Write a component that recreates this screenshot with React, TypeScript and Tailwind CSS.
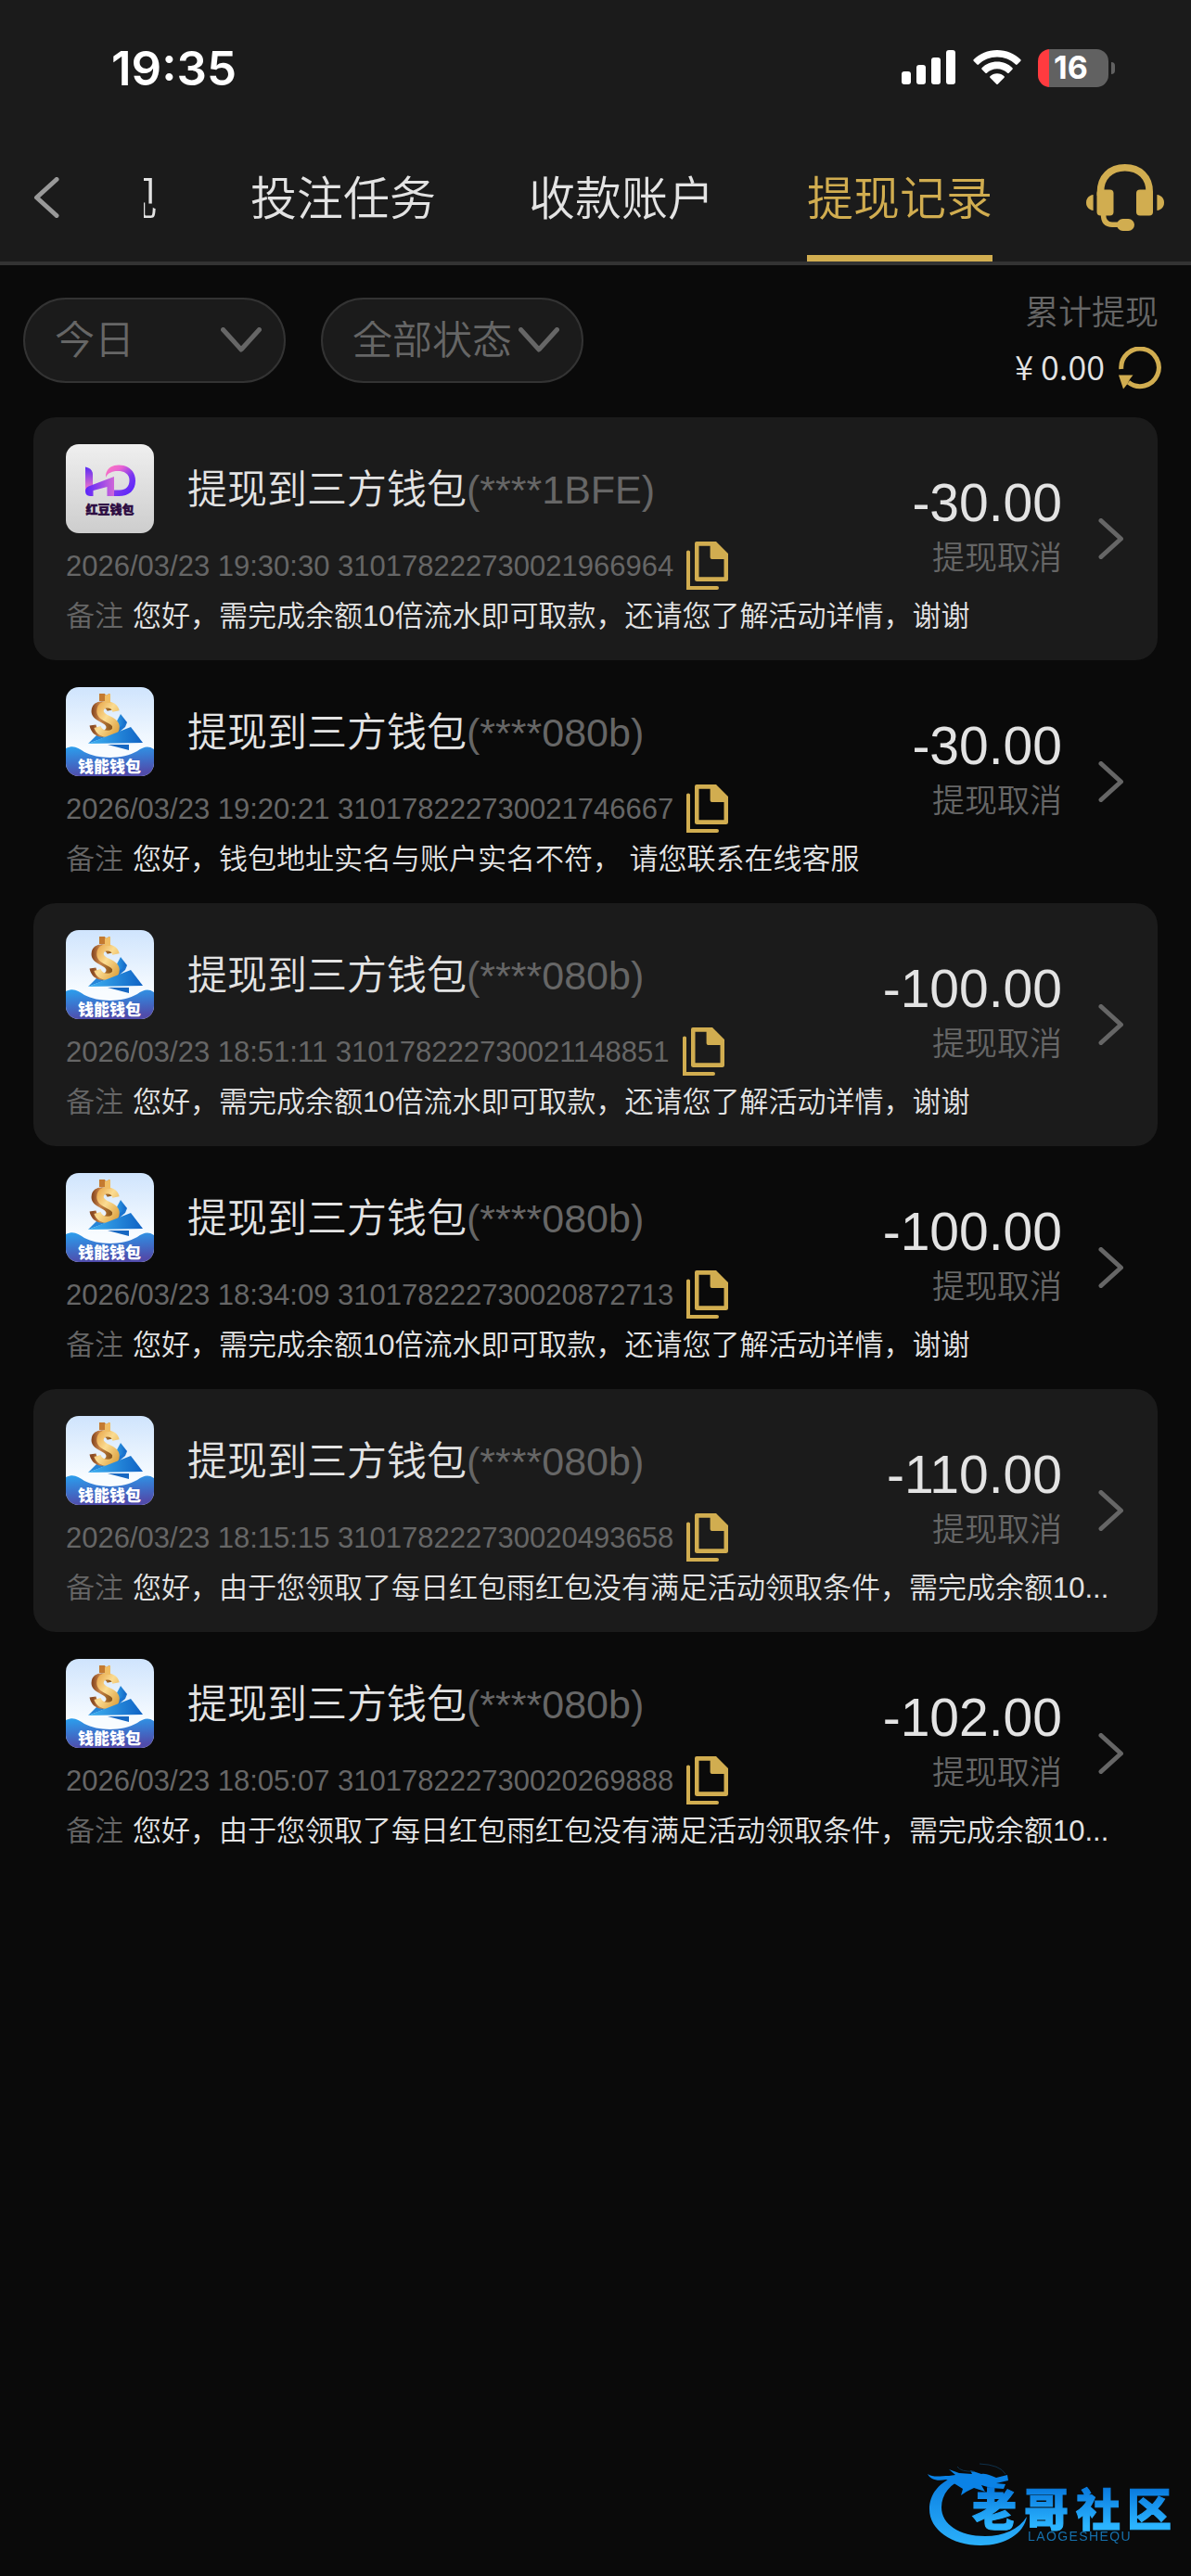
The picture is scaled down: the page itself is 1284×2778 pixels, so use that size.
import React from 'react';

type Wallet = 'hd' | 'qn';

interface WithdrawRecord {
  wallet: Wallet;
  account: string;
  time: string;
  order: string;
  note: string;
  amount: string;
}

const FLOW_NOTE = '您好，需完成余额10倍流水即可取款，还请您了解活动详情，谢谢';
const RAIN_NOTE = '您好，由于您领取了每日红包雨红包没有满足活动领取条件，需完成余额10...';

const RECORDS: WithdrawRecord[] = [
  { wallet: 'hd', account: '(****1BFE)', time: '2026/03/23 19:30:30', order: '310178222730021966964', note: FLOW_NOTE, amount: '-30.00' },
  { wallet: 'qn', account: '(****080b)', time: '2026/03/23 19:20:21', order: '310178222730021746667', note: '您好，钱包地址实名与账户实名不符， 请您联系在线客服', amount: '-30.00' },
  { wallet: 'qn', account: '(****080b)', time: '2026/03/23 18:51:11', order: '310178222730021148851', note: FLOW_NOTE, amount: '-100.00' },
  { wallet: 'qn', account: '(****080b)', time: '2026/03/23 18:34:09', order: '310178222730020872713', note: FLOW_NOTE, amount: '-100.00' },
  { wallet: 'qn', account: '(****080b)', time: '2026/03/23 18:15:15', order: '310178222730020493658', note: RAIN_NOTE, amount: '-110.00' },
  { wallet: 'qn', account: '(****080b)', time: '2026/03/23 18:05:07', order: '310178222730020269888', note: RAIN_NOTE, amount: '-102.00' },
];

function StatusBar() {
  return (
    <div className="flex h-36 items-center justify-between pl-[120px] pr-[82px] pt-[2px] text-white">
      <span className="font-[Inter,sans-serif] text-[51px] font-semibold leading-none">19:35</span>
      <div className="flex items-center gap-[18px]">
        <svg width="59" height="38" viewBox="0 0 59 38" fill="currentColor" aria-hidden="true">
          <rect x="0" y="23" width="10" height="14" rx="3" />
          <rect x="16" y="16" width="10" height="21" rx="3" />
          <rect x="32" y="8" width="10" height="29" rx="3" />
          <rect x="48" y="0" width="10" height="37" rx="3" />
        </svg>
        <svg width="52" height="38" viewBox="0 0 52 38" fill="currentColor" aria-hidden="true">
          <path d="M26 0C36 0 45 4 51.400 10.200Q52 11 51.400 11.800L47.600 15.600Q46.800 16.300 46 15.600C40.600 10.500 33.700 7.600 26 7.600S11.400 10.500 6 15.600Q5.200 16.300 4.400 15.600L.6 11.800Q0 11 .6 10.200C7 4 16 0 26 0Z" />
          <path d="M26 12.600C32.400 12.600 38.200 15.100 42.500 19.200Q43.200 20 42.500 20.800L38.600 24.700Q37.900 25.300 37.100 24.700C34.100 21.900 30.200 20.300 26 20.300S17.900 21.900 14.900 24.700Q14.100 25.300 13.400 24.700L9.500 20.800Q8.800 20 9.500 19.200C13.800 15.100 19.600 12.600 26 12.600Z" />
          <path d="M26 25.200C29 25.200 31.600 26.300 33.600 28.200Q34.300 29 33.600 29.800L26.700 36.700Q26 37.300 25.300 36.700L18.400 29.800Q17.700 29 18.400 28.200C20.400 26.300 23 25.200 26 25.200Z" />
        </svg>
        <div className="flex items-center gap-[3px]">
          <span className="flex h-[41px] w-[76px] items-center rounded-[13px] bg-[linear-gradient(90deg,#ff3b3f_12px,#616161_12px)] pl-[17px] font-[Inter,sans-serif] text-[34px] font-bold leading-none">
            16
          </span>
          <span className="h-[13px] w-1 rounded-r-full bg-[#616161]" />
        </div>
      </div>
    </div>
  );
}

function HeadsetIcon() {
  return (
    <svg width="84" height="72" viewBox="0 0 84 72" fill="#d1ad50" aria-hidden="true">
      <path d="M15.500 34V30C15.500 14 26 3.800 41.800 3.800S68.200 14 68.200 30V34" fill="none" stroke="#d1ad50" strokeWidth="7.600" />
      <rect x="11.500" y="27.500" width="18" height="28" rx="4" />
      <rect x="54" y="27.500" width="18" height="28" rx="4" />
      <path d="M7.600 33V50C3 49.500 0 46 0 41.500S3 33.500 7.600 33Z" />
      <path d="M76.400 33V50C81 49.500 84 46 84 41.500S81 33.500 76.400 33Z" />
      <path d="M18.500 54C18.500 61.500 22 65.200 28 65.200H38" fill="none" stroke="#d1ad50" strokeWidth="5.500" />
      <rect x="33" y="59" width="19" height="13" rx="6.500" />
    </svg>
  );
}

function Chevron({ dir, className }: { dir: 'left' | 'right' | 'down'; className?: string }) {
  if (dir === 'down') {
    return (
      <svg width="44" height="28" viewBox="0 0 44 28" fill="none" className={className} aria-hidden="true">
        <path d="M2.500 2.500L22 24L41.500 2.500" stroke="currentColor" strokeWidth="5" strokeLinecap="round" strokeLinejoin="round" />
      </svg>
    );
  }
  return (
    <svg width="28" height="44" viewBox="0 0 28 44" fill="none" className={className} aria-hidden="true">
      <path
        d={dir === 'left' ? 'M25 2.500L3.500 22L25 41.500' : 'M3 2.500L24.500 22L3 41.500'}
        stroke="currentColor"
        strokeWidth="5"
        strokeLinecap="round"
        strokeLinejoin="round"
      />
    </svg>
  );
}

function TopNav() {
  const tabs = ['现', '投注任务', '收款账户', '提现记录'];
  return (
    <nav className="flex h-[138px] items-stretch">
      <button type="button" aria-label="返回" className="w-[155px] shrink-0 pl-9 text-[#999]">
        <Chevron dir="left" />
      </button>
      <div className="flex min-w-0 flex-1 justify-end gap-[100px] overflow-hidden">
        {tabs.map((tab) => (
          <a
            key={tab}
            href="#"
            aria-current={tab === '提现记录' ? 'page' : undefined}
            className={`flex shrink-0 items-center border-b-[7px] pt-[10px] text-[50px] leading-none ${
              tab === '提现记录' ? 'border-[#d1ad50] text-[#d1ad50]' : 'border-transparent text-[#e3e3e3]'
            }`}
          >
            {tab}
          </a>
        ))}
      </div>
      <button type="button" aria-label="客服" className="ml-[101px] mr-[29px] shrink-0">
        <HeadsetIcon />
      </button>
    </nav>
  );
}

function FilterSelect({ label, value }: { label: string; value: string }) {
  return (
    <div className="relative text-[#666]">
      <select
        aria-label={label}
        className="block h-[92px] w-[283px] appearance-none rounded-full border-2 border-[#333] bg-[#1b1b1b] pl-8 text-[43px] font-[350] leading-none text-[#666]"
      >
        <option>{value}</option>
      </select>
      <Chevron dir="down" className="pointer-events-none absolute right-[26px] top-8" />
    </div>
  );
}

function RefreshIcon() {
  return (
    <svg width="47" height="46" viewBox="0 0 47 46" fill="none" aria-hidden="true">
      <path d="M2.800 24A20.300 20.300 0 1 1 10.500 38.300" stroke="#d1ad50" strokeWidth="5" />
      <path d="M0 30.500H15.500L12 35L9.500 40L5 45.500Z" fill="#d1ad50" />
    </svg>
  );
}

function CopyIcon() {
  return (
    <svg width="45" height="52" viewBox="0 0 45 52" fill="#d1ad50" aria-hidden="true">
      <path
        fillRule="evenodd"
        d="M11 0H32L45 13V40.500Q45 43 42.500 43H11.500Q9 43 9 40.500V2Q9 0 11 0ZM13.500 4.700V38.300H40.500V19H27.500Q25.600 19 25.600 17V4.700Z"
      />
      <path d="M0 11Q0 9.500 2 9.500T4 11V48H33Q35 48 35 50T33 52H0Z" />
    </svg>
  );
}

function HongdouLogo() {
  return (
    <svg width="95" height="96" viewBox="0 0 95 96" className="shrink-0 rounded-[14px]" role="img" aria-label="红豆钱包">
      <defs>
        <linearGradient id="hd-bg" x1="0" y1="0" x2="0" y2="1">
          <stop offset="0" stopColor="#efefef" />
          <stop offset="1" stopColor="#cdcdcd" />
        </linearGradient>
        <linearGradient id="hd-bar" x1="0" y1="0" x2="0" y2="1">
          <stop offset="0" stopColor="#5a2cf5" />
          <stop offset="1" stopColor="#ff7cc4" />
        </linearGradient>
        <linearGradient id="hd-band" x1="0" y1="0" x2="1" y2="0">
          <stop offset="0" stopColor="#5a24fa" />
          <stop offset="1" stopColor="#cf66d8" />
        </linearGradient>
        <linearGradient id="hd-ring" x1="0" y1="0" x2="1" y2="1">
          <stop offset="0" stopColor="#ff79bd" />
          <stop offset="0.300" stopColor="#e863d2" />
          <stop offset="0.600" stopColor="#7a37f0" />
          <stop offset="1" stopColor="#4f1fff" />
        </linearGradient>
      </defs>
      <rect width="95" height="96" fill="url(#hd-bg)" />
      <path d="M21 24.500Q28.500 26 29 32V46L21 51Z" fill="url(#hd-bar)" />
      <path d="M46 49.500H58C64.500 49.500 68.500 45.500 68.500 39C68.500 32 63 29 56 29C50 29 45 31 43 36C42.500 27 49 22.500 57 22.500C67.500 22.500 75 29 75 39.500C75 50 68 56 57 56H46Z" fill="url(#hd-ring)" />
      <path d="M29.500 50V56H26Q21 55.500 21 50.500Q21 46 27 44.500L52 35V56H44.500V46Z" fill="url(#hd-band)" />
      <text x="21.500" y="75" fontSize="13" fontWeight="900" fill="#2c0b41" stroke="#2c0b41" strokeWidth="0.500" fontFamily="Noto Sans CJK SC, sans-serif">
        红豆钱包
      </text>
    </svg>
  );
}

function QiannengLogo() {
  return (
    <svg width="95" height="96" viewBox="0 0 95 96" className="shrink-0 rounded-[14px]" role="img" aria-label="钱能钱包">
      <defs>
        <linearGradient id="qn-sky" x1="0" y1="0" x2="0" y2="1">
          <stop offset="0" stopColor="#cfe4fd" />
          <stop offset="0.700" stopColor="#f8fcff" />
        </linearGradient>
        <linearGradient id="qn-sea" x1="0" y1="0" x2="0.200" y2="1">
          <stop offset="0" stopColor="#2ba0ee" />
          <stop offset="0.500" stopColor="#3b76cf" />
          <stop offset="1" stopColor="#504cab" />
        </linearGradient>
        <linearGradient id="qn-sail" x1="0" y1="0" x2="1" y2="0">
          <stop offset="0" stopColor="#3eb2f2" />
          <stop offset="1" stopColor="#0f62c4" />
        </linearGradient>
        <linearGradient id="qn-gold" x1="0" y1="0" x2="1" y2="1">
          <stop offset="0" stopColor="#e9a94e" />
          <stop offset="0.450" stopColor="#fbdc92" />
          <stop offset="1" stopColor="#dfa545" />
        </linearGradient>
        <linearGradient id="qn-bronze" x1="0" y1="0" x2="1" y2="0">
          <stop offset="0" stopColor="#8a4a22" />
          <stop offset="0.400" stopColor="#c98549" />
          <stop offset="1" stopColor="#8f5a1d" />
        </linearGradient>
      </defs>
      <rect width="95" height="96" fill="url(#qn-sky)" />
      <path d="M59 29L66 38L56 50L50 46Z" fill="url(#qn-sail)" />
      <path d="M66 38L64 43L52 53L48 50Z" fill="#1b74cf" />
      <path d="M24 61L38 47L48 52Z" fill="#2585d8" />
      <path d="M36 7H42L43 9L47 7V15H36Z" fill="#c47a30" />
      <path
        d="M48 25C46 17 31 16 31 26C31 35 47 34 47 43C47 53 31 53 29 41"
        fill="none"
        stroke="url(#qn-bronze)"
        strokeWidth="7"
      />
      <path
        d="M54 26C52 17 37 16 37 26C37 35 54 34 54 43C54 53 37 53 34 43"
        fill="none"
        stroke="url(#qn-gold)"
        strokeWidth="7.500"
      />
      <path d="M42 9L48 7V17H42Z" fill="#f0bd63" />
      <path d="M24 61L70 43L83 60Z" fill="url(#qn-sail)" />
      <path d="M45 62H68V68Z" fill="#1768c2" />
      <path d="M0 66C8 62 13 65 20 70C35 78 62 78 77 69C84 64 89 63 95 67V96H0Z" fill="url(#qn-sea)" />
      <text x="13" y="92" fontSize="17" fontWeight="900" fill="#fff" fontFamily="Noto Sans CJK SC, sans-serif">
        钱能钱包
      </text>
    </svg>
  );
}

function RecordRow({ record, shaded }: { record: WithdrawRecord; shaded: boolean }) {
  return (
    <li className={`rounded-[24px] pb-5 pl-[35px] pr-9 pt-[29px] ${shaded ? 'bg-[#1b1b1b]' : ''}`}>
      <div className="flex items-start">
        <div className="min-w-0 flex-1">
          <div className="flex h-24 items-center gap-9">
            {record.wallet === 'hd' ? <HongdouLogo /> : <QiannengLogo />}
            <h2 className="whitespace-nowrap pt-[2px] text-[43px] leading-[60px] text-[#e3e3e3]">
              提现到三方钱包<span className="text-[#666]">{record.account}</span>
            </h2>
          </div>
          <div className="mt-2 flex h-[54px] items-center gap-[14px] whitespace-nowrap text-[31px] text-[#666]">
            <span className="pt-[2px]">
              {record.time} {record.order}
            </span>
            <button type="button" aria-label="复制订单号">
              <CopyIcon />
            </button>
          </div>
        </div>
        <div className="pt-[30px] text-right">
          <p className="text-[57px] leading-[66px] text-[#e3e3e3]">{record.amount}</p>
          <p className="text-[35px] leading-[54px] text-[#666]">提现取消</p>
        </div>
        <button type="button" aria-label="查看详情" className="ml-[39px] mt-20 text-[#666]">
          <Chevron dir="right" />
        </button>
      </div>
      <p className="truncate pt-px text-[31px] leading-[54px] text-[#e3e3e3]">
        <span className="mr-[10px] text-[#666]">备注</span>
        {record.note}
      </p>
    </li>
  );
}

function CommunityMark() {
  return (
    <svg width="268" height="96" viewBox="0 0 268 96" className="fixed bottom-[28px] right-[16px]" role="img" aria-label="老哥社区">
      <defs>
        <linearGradient id="mark-ring" x1="0" y1="0" x2="0" y2="1">
          <stop offset="0" stopColor="#087be0" />
          <stop offset="1" stopColor="#2bb0fa" />
        </linearGradient>
        <linearGradient id="mark-text" x1="0" y1="0" x2="0" y2="1">
          <stop offset="0.200" stopColor="#0878dd" />
          <stop offset="0.800" stopColor="#2bb4ff" />
        </linearGradient>
      </defs>
      <path
        d="M34 15C12 22 2 36 2 52C2 74 26 91 57 91C84 91 104 78 107 60C98 74 82 81 62 81C34 81 15 68 15 50C15 36 24 24 42 18Z"
        fill="url(#mark-ring)"
      />
      <path
        d="M0 14C6 18 14 16 23 16L30 15L23 9L34 13L48 14L46 10L58 14C64 13 68 16 74 18L86 15L87 21L74 24L84 25L82 30L68 29L58 26L62 33L50 29L42 33L36 37L38 30L30 25L20 20C10 22 3 20 0 14Z"
        fill="#0a82e6"
      />
      <path d="M32 6Q36 12 50 11M56 3Q78 4 84 14" fill="none" stroke="#10324c" strokeWidth="1" />
      <text x="48 104 160 215" y="70" fontSize="48" fontWeight="900" fill="url(#mark-text)" stroke="url(#mark-text)" strokeWidth="1" fontFamily="Noto Sans CJK SC, sans-serif">
        老哥社区
      </text>
      <text x="108" y="86" fontSize="14" fill="#1670ac" className="tracking-widest" fontFamily="Liberation Sans, sans-serif">
        LAOGESHEQU
      </text>
    </svg>
  );
}

export default function App() {
  return (
    <div className="min-h-screen bg-[#0a0a0a] font-['Liberation_Sans','Noto_Sans_CJK_SC',sans-serif] font-[350]">
      <header className="border-b-4 border-[#333] bg-[#1b1b1b]">
        <StatusBar />
        <TopNav />
      </header>
      <main>
        <section className="flex items-center justify-between pb-6 pl-[25px] pr-[31px] pt-[22px]">
          <div className="flex gap-[38px]">
            <FilterSelect label="时间" value="今日" />
            <FilterSelect label="状态" value="全部状态" />
          </div>
          <div className="flex flex-col items-end text-[36px] leading-[59px]">
            <span className="mr-1 text-[#666]">累计提现</span>
            <div className="flex items-center gap-[15px]">
              <span className="pb-1 font-['Noto_Sans_CJK_SC',sans-serif] leading-[55px] text-[#e3e3e3]">¥ 0.00</span>
              <button type="button" aria-label="刷新">
                <RefreshIcon />
              </button>
            </div>
          </div>
        </section>
        <ul className="px-9">
          {RECORDS.map((record, i) => (
            <RecordRow key={record.order} record={record} shaded={i % 2 === 0} />
          ))}
        </ul>
      </main>
      <CommunityMark />
    </div>
  );
}
